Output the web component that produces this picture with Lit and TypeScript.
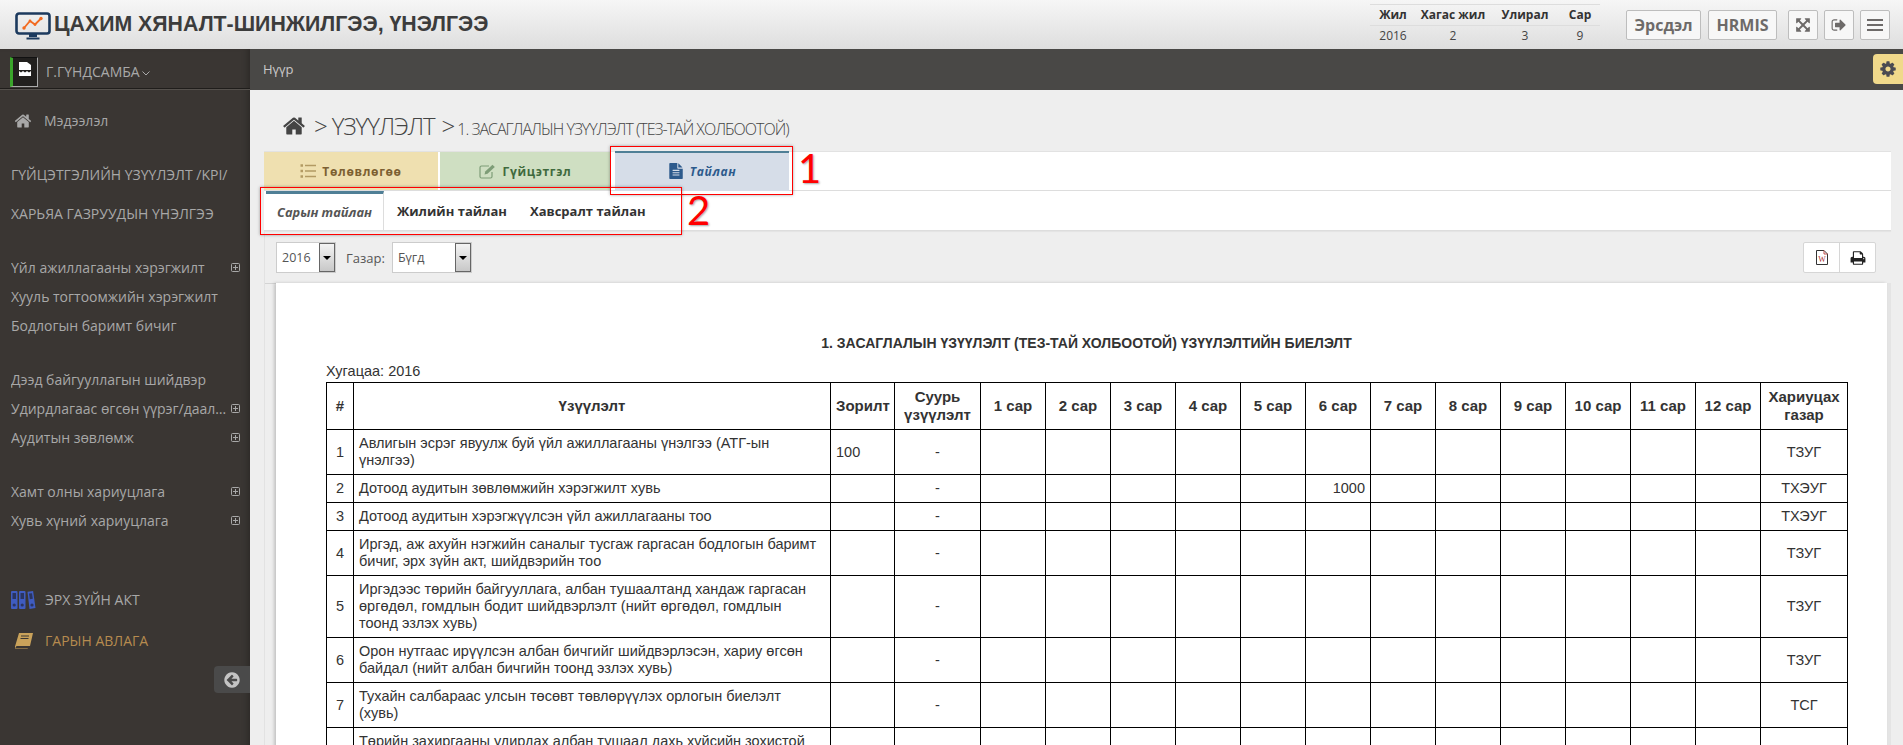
import { LitElement, html, css } from 'lit';
import { customElement } from 'lit/decorators.js';

const fa = (d: string, size: number, cls = '') => html`<svg class=${cls} width=${size} height=${size} viewBox="0 0 1792 1792" fill="currentColor"><path d=${d}></path></svg>`;

const HOME = 'M1472 992v480q0 26-19 45t-45 19h-384v-384H768v384H384q-26 0-45-19t-19-45V992q0-1 .5-3t.5-3l575-474 575 474q1 2 1 6zm223-69l-62 74q-8 9-21 11h-3q-13 0-21-7L896 424l-692 577q-12 8-24 7-13-2-21-11l-62-74q-8-10-7-23.5t11-21.5l719-599q32-26 76-26t76 26l244 204V288q0-14 9-23t23-9h192q14 0 23 9t9 23v408l219 182q10 8 11 21.5t-7 23.5z';
const COG = 'M1152 896q0-106-75-181t-181-75-181 75-75 181 75 181 181 75 181-75 75-181zm512-109v222q0 12-8 23t-20 13l-185 28q-19 54-39 91 35 50 107 138 10 12 10 25t-9 23q-27 37-99 108t-94 71q-12 0-26-9l-138-108q-44 23-91 38-16 136-29 186-7 28-36 28H785q-14 0-24.5-8.5T749 1634l-28-184q-49-16-90-37l-141 107q-10 9-25 9-14 0-25-11-126-114-165-168-7-10-7-23 0-12 8-23 15-21 51-66.5t54-70.5q-27-50-41-99l-183-27q-13-2-21-12.5t-8-23.5V783q0-12 8-23t19-13l186-28q14-46 39-92-40-57-107-138-10-12-10-24 0-10 9-23 26-36 98.5-107.5T465 263q13 0 26 10l138 107q44-23 91-38 16-136 29-186 7-28 36-28h222q14 0 24.5 8.5T1043 158l28 184q49 16 90 37l142-107q9-9 24-9 13 0 25 10 129 119 165 170 7 8 7 22 0 12-8 23-15 21-51 66.5t-54 70.5q26 50 41 98l183 28q13 2 21 12.5t8 23.5z';
const PRINT = 'M448 1536h896v-256H448v256zm0-640h896V512h-160q-40 0-68-28t-28-68V256H448v640zm1152 64q0-26-19-45t-45-19-45 19-19 45 19 45 45 19 45-19 19-45zm128 0v416q0 13-9.5 22.5t-22.5 9.5h-224v160q0 40-28 68t-68 28H416q-40 0-68-28t-28-68v-160H96q-13 0-22.5-9.5T64 1376V960q0-79 56.5-135.5T256 768h64V224q0-40 28-68t68-28h672q40 0 88 20t76 48l152 152q28 28 48 76t20 88v256h64q79 0 135.5 56.5T1728 960z';
const SIGNOUT = 'M704 1440q0 4 1 20t.5 26.5-3 23.5-10 19.5-20.5 6.5H352q-119 0-203.5-84.5T64 1248V544q0-119 84.5-203.5T352 256h320q13 0 22.5 9.5T704 288q0 4 1 20t.5 26.5-3 23.5-10 19.5-20.5 6.5H352q-66 0-113 47t-47 113v704q0 66 47 113t113 47h312l11.5 1 11.5 3 8 5.5 7 9 2 13.5zm928-544q0 26-19 45l-544 544q-19 19-45 19t-45-19-19-45v-288H512q-26 0-45-19t-19-45V704q0-26 19-45t45-19h448V352q0-26 19-45t45-19 45 19l544 544q19 19 19 45z';
const EXPAND = 'M1411 541l-355 355 355 355 144-144q29-31 70-14 39 17 39 59v448q0 26-19 45t-45 19h-448q-42 0-59-40-17-39 14-69l144-144-355-355-355 355 144 144q31 30 14 69-17 40-59 40H192q-26 0-45-19t-19-45v-448q0-42 40-59 39-17 69 14l144 144 355-355-355-355-144 144q-19 19-45 19-12 0-24-5-40-17-40-59V192q0-26 19-45t45-19h448q42 0 59 40 17 39-14 69L541 381l355 355 355-355-144-144q-31-30-14-69 17-40 59-40h448q26 0 45 19t19 45v448q0 42-39 59-13 5-25 5-26 0-45-19z';
const BACK = 'M1408 960V832q0-26-19-45t-45-19H841l189-189q19-19 19-45t-19-45l-91-91q-18-18-45-18t-45 18L486 760l-91 91q-18 18-18 45t18 45l91 91 362 362q18 18 45 18t45-18l91-91q18-18 18-45t-18-45L840 1024h504q26 0 45-19t19-45zm256-64q0 209-103 385.5T1281.5 1561 896 1664t-385.5-103T231 1281.5 128 896t103-385.5T510.5 231 896 128t385.5 103T1561 510.5 1664 896z';
const FILE = 'M1596 476q14 14 28 36H1152V40q22 14 36 28zm-476 164h532v1056q0 40-28 68t-68 28H240q-40 0-68-28t-28-68V96q0-40 28-68t68-28h800v544q0 40 28 68t68 28zm160 736v-64q0-14-9-23t-23-9H544q-14 0-23 9t-9 23v64q0 14 9 23t23 9h704q14 0 23-9t9-23zm0-256v-64q0-14-9-23t-23-9H544q-14 0-23 9t-9 23v64q0 14 9 23t23 9h704q14 0 23-9t9-23zm0-256v-64q0-14-9-23t-23-9H544q-14 0-23 9t-9 23v64q0 14 9 23t23 9h704q14 0 23-9t9-23z';

const logo = html`<svg class="logo" width="38" height="30" viewBox="0 0 38 30">
  <rect x="1.5" y="1.5" width="33" height="20" rx="2.5" fill="none" stroke="#1c3a5e" stroke-width="2.6"></rect>
  <path d="M14 22h8v3h-8zM11.5 25.5h13v2h-13z" fill="#1c3a5e"></path>
  <path d="M9 16l6-7 5 3.5 6-6" fill="none" stroke="#f26b21" stroke-width="1.8"></path>
  <circle cx="9" cy="16" r="1.7" fill="#f26b21"></circle><circle cx="15" cy="9" r="1.4" fill="#f26b21"></circle>
  <circle cx="20" cy="12.5" r="1.4" fill="#f26b21"></circle><circle cx="26" cy="6.5" r="1.7" fill="#f26b21"></circle>
</svg>`;

const plus = html`<svg class="plus" width="9" height="9" viewBox="0 0 9 9"><rect x=".5" y=".5" width="8" height="8" rx="1" fill="none" stroke="currentColor"></rect><path d="M2 4.5h5M4.5 2v5" stroke="currentColor"></path></svg>`;

const binders = html`<svg width="25" height="18" viewBox="0 0 25 18" fill="#3f5cc0">
  <rect x="0" y="0" width="6.5" height="18" rx="1"></rect><rect x="8" y="0" width="6.5" height="18" rx="1"></rect>
  <path d="M16.5 .8l5.6-.8 2.4 17-6 .9z"></path>
  <g fill="#2a3560"><rect x="1.5" y="2" width="3.5" height="6"></rect><rect x="9.5" y="2" width="3.5" height="6"></rect><path d="M18 2.6l3-.4.8 5.6-3 .4z"></path>
  <circle cx="3.2" cy="14" r="1.6"></circle><circle cx="11.2" cy="14" r="1.6"></circle><circle cx="21" cy="14" r="1.6"></circle></g>
</svg>`;

const book = html`<svg width="18" height="16" viewBox="0 0 18 16"><path d="M4 0h14l-3 13H1.500L0 15.500h13l-.5.500H1q-1.500 0-1-2.500z" fill="#c9a25a"></path><path d="M6 3h8M5.500 5.500h8" stroke="#3a3633"></path></svg>`;

const listIcon = html`<svg width="16" height="14" viewBox="0 0 16 14" fill="none" stroke="currentColor" stroke-width="1.6"><path d="M5 1.500h11M5 7h11M5 12.500h11"></path><path d="M.5 1.500h2.500M.5 7h2.500M.5 12.500h2.500" stroke-width="2.6"></path></svg>`;
const editIcon = html`<svg width="18" height="15" viewBox="0 0 18 15" fill="none" stroke="currentColor" stroke-width="1.2"><path d="M13 8v4.500q0 1.500-1.500 1.500h-9Q1 14 1 12.500v-9Q1 2 2.500 2H10"></path><path d="M5.500 10.500l.7-3L13.500 .8l2.300 2.300-7.300 6.700z" fill="currentColor" stroke="none"></path></svg>`;
const wordIcon = html`<svg width="12" height="15" viewBox="0 0 12 15"><path d="M.5 .5h7.500l3.500 3.500v10.500h-11z" fill="#fff" stroke="#333"></path><path d="M8 .5v3.500h3.500" fill="none" stroke="#c0504d"></path><text x="6" y="12" text-anchor="middle" font-family="Liberation Serif" font-size="8" fill="#a33">W</text></svg>`;

interface Row { n: string; name: string; goal?: string; m6?: string; org: string; }

const rows: Row[] = [
  { n: '1', name: 'Авлигын эсрэг явуулж буй үйл ажиллагааны үнэлгээ (АТГ-ын\nүнэлгээ)', goal: '100', org: 'ТЗУГ' },
  { n: '2', name: 'Дотоод аудитын зөвлөмжийн хэрэгжилт хувь', m6: '1000', org: 'ТХЭУГ' },
  { n: '3', name: 'Дотоод аудитын хэрэгжүүлсэн үйл ажиллагааны тоо', org: 'ТХЭУГ' },
  { n: '4', name: 'Иргэд, аж ахуйн нэгжийн саналыг тусгаж гаргасан бодлогын баримт\nбичиг, эрх зүйн акт, шийдвэрийн тоо', org: 'ТЗУГ' },
  { n: '5', name: 'Иргэдээс төрийн байгууллага, албан тушаалтанд хандаж гаргасан\nөргөдөл, гомдлын бодит шийдвэрлэлт (нийт өргөдөл, гомдлын\nтоонд эзлэх хувь)', org: 'ТЗУГ' },
  { n: '6', name: 'Орон нутгаас ирүүлсэн албан бичгийг шийдвэрлэсэн, хариу өгсөн\nбайдал (нийт албан бичгийн тоонд эзлэх хувь)', org: 'ТЗУГ' },
  { n: '7', name: 'Тухайн салбараас улсын төсөвт төвлөрүүлэх орлогын биелэлт\n(хувь)', org: 'ТСГ' },
  { n: '8', name: 'Төрийн захиргааны удирдах албан тушаал дахь хүйсийн зохистой\nхарьцаа', goal: '30', org: 'ТЗУГ' },
];

const months = Array.from({ length: 12 }, (_, i) => i + 1);

@customElement('app-root')
export class AppRoot extends LitElement {
  static styles = css`
    :host {
      display: block;
      position: relative;
      height: 100vh;
      overflow: hidden;
      font-family: "Open Sans", sans-serif;
      font-size: 14px;
      color: #333;
      background: #eee;
    }
    .top {
      height: 49px;
      box-sizing: border-box;
      display: flex;
      align-items: center;
      background: linear-gradient(#f6f6f6, #dedede);
      padding: 0 13px 0 15px;
    }
    .logo { flex: none; margin-top: 4px; }
    .brand {
      margin-left: 1px;
      font: bold 21.3px "Liberation Sans", sans-serif;
      color: #3c3c3c;
      flex: 1;
    }
    .period { margin-right: 26px; border-collapse: collapse; font-size: 12px; line-height: 20px; border-top: 1px solid #ddd; }
    .period th, .period td { padding: 0; text-align: center; color: #333; }
    .period th { border-bottom: 1px solid #ddd; font-weight: 700; }
    .period td { color: #444; }
    .btn {
      height: 30px;
      box-sizing: border-box;
      border: 1px solid #bdbdbd;
      border-radius: 2px;
      background: #f7f7f7;
      color: #6d6a69;
      display: flex;
      align-items: center;
      justify-content: center;
      font-weight: 700;
      font-size: 16px;
    }
    .btn.text1 { width: 75px; margin-right: 7px; }
    .btn.text2 { width: 69px; margin-right: 11px; }
    .btn.icon { width: 30px; margin-right: 6px; }
    .btn.icon:last-child { margin-right: 0; }
    .layout { display: grid; grid-template-columns: 250px 1fr; height: calc(100% - 49px); }

    .side {
      background: #3a3633;
      box-shadow: inset -6px 0 6px -4px rgba(0, 0, 0, .25);
      color: #a8a8a8;
      position: relative;
    }
    .user {
      height: 40px;
      box-sizing: border-box;
      border-bottom: 1px solid #1f1d1b;
      box-shadow: 0 1px 0 #55514d;
      padding: 8px 0 0 10px;
      display: flex;
      align-items: flex-start;
    }
    .avatar {
      width: 28px;
      height: 30px;
      box-sizing: border-box;
      border-left: 3px solid #3aa52b;
      border-right: 1px solid #aaa;
      border-bottom: 1px solid #aaa;
      border-top: 1px solid #111;
      background: #22201e;
      display: flex;
      justify-content: center;
      padding-top: 4px;
      flex: none;
    }
    .uname { margin-left: 8px; line-height: 30px; font-size: 14px; color: #a9a9a9; }
    .uname svg { margin-left: 2px; vertical-align: 1px; }
    .menu { padding-top: 17px; }
    .item {
      height: 29px;
      display: flex;
      align-items: center;
      padding: 0 10px 0 11px;
      white-space: nowrap;
    }
    .item span { flex: 1; min-width: 0; overflow: hidden; text-overflow: ellipsis; }
    .plus { flex: none; margin-left: 1px; color: #a8a8a8; }
    .item.home { padding-left: 14px; }
    .item.home svg { margin-right: 12px; }
    .item.caps { height: 39px; }
    .item.ext { height: 41px; }
    .item.ext .ico { width: 34px; flex: none; display: flex; }
    .item.ext.gold { color: #b68b4f; }
    .item.ext.gold .ico { padding-left: 4px; box-sizing: border-box; }
    .g1 { margin-top: 20px; }
    .g2 { margin-top: 25px; }
    .g3 { margin-top: 44px; }
    .m1 { margin-top: 20px; }
    .collapse {
      position: absolute;
      right: 0;
      top: 617px;
      width: 36px;
      height: 27px;
      background: #4a4a4a;
      border-radius: 4px 0 0 4px;
      color: #c4c4c4;
      display: flex;
      align-items: center;
      padding-left: 9px;
      box-sizing: border-box;
    }

    .main { min-width: 0; display: flex; flex-direction: column; position: relative; }
    .crumbbar {
      height: 41px;
      flex: none;
      box-sizing: border-box;
      background: #494846;
      color: #c9c9c9;
      padding: 0 13px;
      line-height: 40px;
      font-size: 13px;
    }
    .gear {
      position: absolute;
      right: 0;
      top: 5px;
      width: 30px;
      height: 30px;
      background: #f0d98b;
      border-radius: 4px 0 0 4px;
      color: #4a4a52;
      display: flex;
      align-items: center;
      justify-content: center;
    }
    .content { padding: 0 14px 0 14px; flex: 1; min-height: 0; }
    .heading {
      height: 61px;
      box-sizing: border-box;
      padding: 10px 0 0 18px;
      display: flex;
      align-items: center;
      color: #444;
      font-weight: 300;
      white-space: nowrap;
    }
    .heading svg { color: #444; margin-right: 8px; }
    .heading .big { font-size: 24px; letter-spacing: -1.1px; }
    .heading .small { font-size: 16px; letter-spacing: -1px; margin-left: 7px; }
    .heading .gt { font-size: 24px; }
    .tabs {
      height: 40px;
      display: flex;
      background: #fff;
      border-top: 1px solid #e2e2e2;
      box-sizing: border-box;
      margin-right: -2px;
      border-bottom: 1px solid #ddd;
    }
    .tab {
      display: flex;
      align-items: center;
      justify-content: center;
      gap: 6px;
      font-weight: 700;
      font-size: 12px;
      letter-spacing: .65px;
    }
    .tab.plan { width: 174px; background: #efe0b0; color: #7d6032; margin-right: 2px; }
    .tab.plan svg { color: #b39a63; }
    .tab.do { width: 170px; background: #cfdfc2; color: #3f6a3d; margin-right: 5px; }
    .tab.do svg { color: #7e9d77; }
    .tab.rep {
      width: 174px;
      background: #d6dde8;
      color: #2d5a8c;
      font-style: italic;
      border-top: 2px solid #4f7f96;
      margin-top: -1px;
      padding-bottom: 2px;
      box-sizing: border-box;
      height: 40px;
    }
    .subtabs {
      height: 40px;
      box-sizing: border-box;
      display: flex;
      background: #fff;
      margin-right: -2px;
      border-bottom: 1px solid #ddd;
      box-shadow: 0 1px 1px rgba(0, 0, 0, .04);
    }
    .sub { display: flex; align-items: center; font-weight: 700; font-size: 13px; color: #333; }
    .sub.on {
      margin-left: 2px;
      width: 118px;
      justify-content: center;
      border-top: 3px solid #4f7f96;
      border-right: 1px solid #ddd;
      box-sizing: border-box;
      font-style: italic;
      color: #555;
      font-size: 12.8px;
    }
    .sub.b { margin-left: 13px; }
    .sub.c { margin-left: 23px; }
    .panel { border-left: 1px solid #e2e2e2; margin-right: -2px; }
    .filters {
      height: 52px;
      box-sizing: border-box;
      display: flex;
      align-items: center;
      padding: 1px 15px 0 11px;
      box-shadow: 0 1px 0 #d4d4d4;
    }
    .select {
      height: 31px;
      box-sizing: border-box;
      border: 1px solid #ccc;
      background: #fff;
      display: flex;
      align-items: stretch;
      font-size: 12.5px;
      color: #555;
    }
    .select span { flex: 1; line-height: 29px; padding-left: 5px; }
    .select i {
      width: 16px;
      border: 1px solid #666;
      background: linear-gradient(#f4f4f4, #c8c8c8);
      display: flex;
      align-items: center;
      justify-content: center;
      box-sizing: border-box;
    }
    .select i::after { content: ""; border: 4px solid transparent; border-top-color: #000; border-bottom: 0; }
    .select.y { width: 60px; }
    .select.z { width: 80px; }
    .flabel { margin: 0 7px 0 10px; font-size: 13px; color: #555; }
    .actions { margin-left: auto; display: flex; border: 1px solid #d6d6d6; border-radius: 2px; background: #fff; height: 31px; box-sizing: border-box; }
    .actions div { width: 35px; display: flex; align-items: center; justify-content: center; color: #222; }
    .actions div + div { border-left: 1px solid #d6d6d6; }
    .card {
      margin-left: 11px;
      margin-right: 4px;
      background: #fff;
      padding: 50px 40px 0 50px;
      box-shadow: -2px 0 3px rgba(0, 0, 0, .18), 4px 0 0 #e4e4e4;
      font-family: "Liberation Sans", sans-serif;
      color: #333;
      height: 500px;
      box-sizing: border-box;
    }
    .card h1 { margin: 0; text-align: center; font-size: 14px; line-height: 21px; font-weight: 700; color: #333; }
    .span { margin-top: 9px; font-size: 14.5px; line-height: 17px; }
    table.report { border-collapse: collapse; table-layout: fixed; width: 1521px; margin-top: 2px; font-size: 14.5px; line-height: 17px; color: #333; }
    .report th, .report td { border: 1px solid #000; padding: 5px; box-sizing: border-box; }
    .report th { font-weight: 700; font-size: 15px; line-height: 18px; text-align: center; color: #333; }
    .c { text-align: center; }
    .r { text-align: right; }
    .report td { vertical-align: middle; }
    .report td.name { white-space: pre-line; }

    .mark { position: absolute; border: 1px solid #f00; box-shadow: 0 0 3px rgba(0, 0, 0, .35); pointer-events: none; }
    .m-1 { left: 610px; top: 146px; width: 181px; height: 47px; }
    .m-2 { left: 260px; top: 187px; width: 420px; height: 46px; }
    .num {
      position: absolute;
      font: 40px/40px Lato, sans-serif;
      color: #f00;
      text-shadow: 1px 1px 2px rgba(0, 0, 0, .35);
    }
    .n1 { left: 798px; top: 148px; }
    .n2 { left: 687px; top: 190px; }
  `;

  private item(label: string, more = true, cls = '') {
    return html`<div class="item ${cls}"><span>${label}</span>${more ? plus : ''}</div>`;
  }

  render() {
    return html`
      <div class="top">
        ${logo}
        <div class="brand">ЦАХИМ ХЯНАЛТ-ШИНЖИЛГЭЭ, ҮНЭЛГЭЭ</div>
        <table class="period">
          <colgroup><col style="width:46px" /><col style="width:74px" /><col style="width:70px" /><col style="width:40px" /></colgroup>
          <tr><th>Жил</th><th>Хагас жил</th><th>Улирал</th><th>Сар</th></tr>
          <tr><td>2016</td><td>2</td><td>3</td><td>9</td></tr>
        </table>
        <div class="btn text1">Эрсдэл</div>
        <div class="btn text2">HRMIS</div>
        <div class="btn icon">${fa(EXPAND, 16)}</div>
        <div class="btn icon">${fa(SIGNOUT, 16)}</div>
        <div class="btn icon"><svg width="16" height="14" viewBox="0 0 16 14" fill="currentColor"><rect y="1" width="16" height="2"></rect><rect y="6" width="16" height="2"></rect><rect y="11" width="16" height="2"></rect></svg></div>
      </div>
      <div class="layout">
        <aside class="side">
          <div class="user">
            <div class="avatar">
              <svg width="12" height="14" viewBox="0 0 12 14" fill="#fff"><path d="M0 0h8l4 3v5H0z"></path><path d="M0 9l2 1.500 2-1.500 2 1.500 2-1.500 2 1.500 2-1.500v5H0z"></path></svg>
            </div>
            <div class="uname">Г.ГҮНДСАМБА<svg width="8" height="5" viewBox="0 0 8 5" fill="none" stroke="currentColor"><path d="M.5 .5L4 4 7.500 .5"></path></svg></div>
          </div>
          <nav class="menu">
            <div class="item home">${fa(HOME, 18)}<span>Мэдээлэл</span></div>
            <div class="m1"></div>
            ${this.item('ГҮЙЦЭТГЭЛИЙН ҮЗҮҮЛЭЛТ /KPI/', false, 'caps')}
            ${this.item('ХАРЬЯА ГАЗРУУДЫН ҮНЭЛГЭЭ', false, 'caps')}
            <div class="g1"></div>
            ${this.item('Үйл ажиллагааны хэрэгжилт')}
            ${this.item('Хууль тогтоомжийн хэрэгжилт', false)}
            ${this.item('Бодлогын баримт бичиг', false)}
            <div class="g2"></div>
            ${this.item('Дээд байгууллагын шийдвэр', false)}
            ${this.item('Удирдлагаас өгсөн үүрэг/даалгавар')}
            ${this.item('Аудитын зөвлөмж')}
            <div class="g2"></div>
            ${this.item('Хамт олны хариуцлага')}
            ${this.item('Хувь хүний хариуцлага')}
            <div class="g3"></div>
            <div class="item ext"><div class="ico">${binders}</div><span>ЭРХ ЗҮЙН АКТ</span></div>
            <div class="item ext gold"><div class="ico">${book}</div><span>ГАРЫН АВЛАГА</span></div>
          </nav>
          <div class="collapse">${fa(BACK, 18)}</div>
        </aside>
        <main class="main">
          <div class="crumbbar">Нүүр</div>
          <div class="gear">${fa(COG, 18)}</div>
          <div class="content">
            <div class="heading">
              ${fa(HOME, 24)}
              <span class="big">&gt; ҮЗҮҮЛЭЛТ</span>
              <span class="small"><span class="gt">&gt;</span> 1. ЗАСАГЛАЛЫН ҮЗҮҮЛЭЛТ (ТЕЗ-ТАЙ ХОЛБООТОЙ)</span>
            </div>
            <div class="tabs">
              <div class="tab plan">${listIcon}Төлөвлөгөө</div>
              <div class="tab do">${editIcon}Гүйцэтгэл</div>
              <div class="tab rep">${fa(FILE, 16)}Тайлан</div>
            </div>
            <div class="subtabs">
              <div class="sub on">Сарын тайлан</div>
              <div class="sub b">Жилийн тайлан</div>
              <div class="sub c">Хавсралт тайлан</div>
            </div>
            <div class="panel">
              <div class="filters">
                <div class="select y"><span>2016</span><i></i></div>
                <div class="flabel">Газар:</div>
                <div class="select z"><span>Бүгд</span><i></i></div>
                <div class="actions"><div>${wordIcon}</div><div>${fa(PRINT, 16)}</div></div>
              </div>
              <div class="card">
                <h1>1. ЗАСАГЛАЛЫН ҮЗҮҮЛЭЛТ (ТЕЗ-ТАЙ ХОЛБООТОЙ) ҮЗҮҮЛЭЛТИЙН БИЕЛЭЛТ</h1>
                <div class="span">Хугацаа: 2016</div>
                <table class="report">
                  <colgroup>
                    <col style="width:27px" /><col style="width:477px" /><col style="width:64px" /><col style="width:86px" />
                    ${months.map(() => html`<col style="width:65px" />`)}
                    <col style="width:87px" />
                  </colgroup>
                  <tr>
                    <th>#</th><th>Үзүүлэлт</th><th>Зорилт</th><th>Суурь үзүүлэлт</th>
                    ${months.map((m) => html`<th>${m} сар</th>`)}
                    <th>Хариуцах газар</th>
                  </tr>
                  ${rows.map((r) => html`<tr>
                    <td class="c">${r.n}</td><td class="name">${r.name}</td><td>${r.goal ?? ''}</td><td class="c">-</td>
                    ${months.map((m) => html`<td class="r">${m === 6 ? r.m6 ?? '' : ''}</td>`)}
                    <td class="c">${r.org}</td>
                  </tr>`)}
                </table>
              </div>
            </div>
          </div>
        </main>
      </div>
      <div class="mark m-1"></div>
      <div class="mark m-2"></div>
      <div class="num n1">1</div>
      <div class="num n2">2</div>
    `;
  }
}
